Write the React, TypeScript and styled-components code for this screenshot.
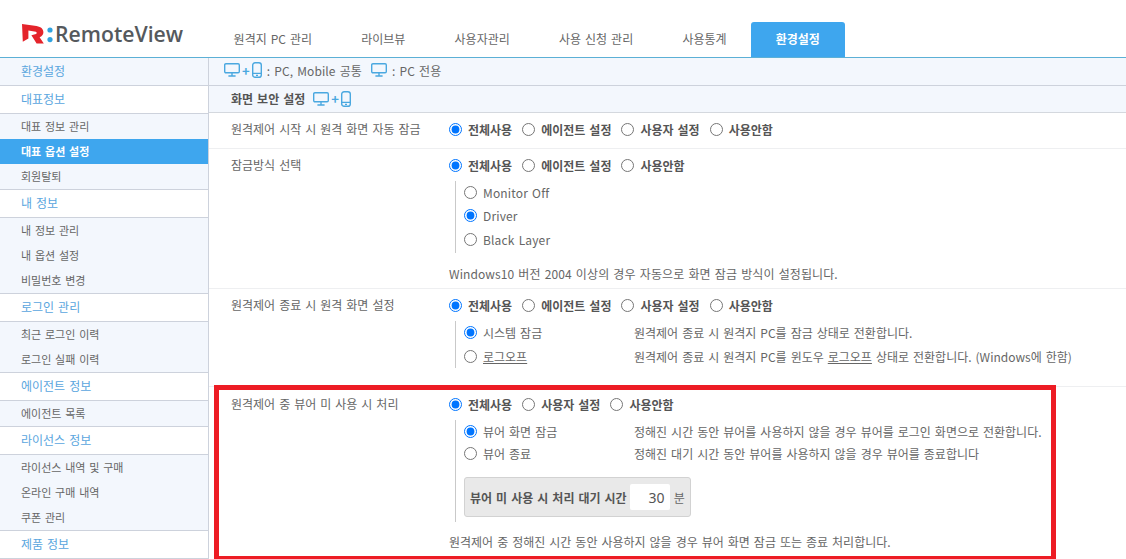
import React from "react";
import styled, { createGlobalStyle } from "styled-components";

const GlobalStyle = createGlobalStyle`
    html, body {
        margin: 0;
        padding: 0;
        background: #fff;
        overflow: hidden;
    }
    body {
        font-family: "Noto Sans CJK KR", "Noto Sans", sans-serif;
        font-size: 12px;
        word-spacing: 1.3px;
        color: #555;
    }
`;

const Page = styled.div`
    width: 1126px;
    height: 559px;
    overflow: hidden;
    position: relative;
`;

const Header = styled.header`
    display: flex;
    height: 57px;
    border-bottom: 1px solid #5cb0d6;
    box-sizing: content-box;
`;

const LogoBox = styled.div`
    width: 208px;
    display: flex;
    align-items: flex-start;
    padding: 24px 0 0 22px;
    box-sizing: border-box;
`;

const LogoText = styled.span`
    font-family: "Open Sans", sans-serif;
    font-size: 21.2px;
    line-height: 20px;
    font-weight: 600;
    color: #55595d;
    margin-left: 1px;
`;

const Tabs = styled.nav`
    display: flex;
    align-items: flex-end;
    padding-left: 1px;
`;

const Tab = styled.div<{ $active?: boolean }>`
    height: 35px;
    padding: 0 24.6px 2px;
    display: flex;
    align-items: center;
    box-sizing: border-box;
    white-space: nowrap;
    color: ${(p) => (p.$active ? "#fff" : "#666")};
    font-weight: ${(p) => (p.$active ? 700 : 400)};
    background: ${(p) => (p.$active ? "#3ea6ee" : "transparent")};
    border-radius: 3px 3px 0 0;
`;

const Body = styled.div`
    display: flex;
    height: 501px;
`;

const Sidebar = styled.aside`
    width: 209px;
    flex-shrink: 0;
    border-right: 1px solid #cdd2dc;
    box-sizing: border-box;
`;

const SideHead = styled.div<{ $tinted?: boolean }>`
    height: 28px;
    box-sizing: border-box;
    padding: 0 0 3px 21px;
    display: flex;
    align-items: center;
    color: #5aa6de;
    background: ${(p) => (p.$tinted ? "#f3f7fd" : "#fff")};
    border-bottom: 1px solid #cdd2dc;
`;

const SideGroup = styled.div`
    background: #f3f7fd;
    border-bottom: 1px solid #cdd2dc;
`;

const SideItem = styled.div<{ $active?: boolean }>`
    height: 25px;
    box-sizing: border-box;
    padding: 0 0 2px 21px;
    display: flex;
    align-items: center;
    font-size: 11px;
    color: ${(p) => (p.$active ? "#fff" : "#666")};
    font-weight: ${(p) => (p.$active ? 700 : 400)};
    background: ${(p) => (p.$active ? "#3ea6ee" : "transparent")};
`;

const Main = styled.main`
    flex: 1;
    min-width: 0;
`;

const InfoBar = styled.div`
    height: 28px;
    box-sizing: border-box;
    padding: 0 0 3px 15px;
    display: flex;
    align-items: center;
    background: #f3f7fd;
    border-bottom: 1px solid #cdd2dc;
    color: #666;
`;

const InfoText = styled.span`
    margin: 0 9px 0 5px;
    letter-spacing: 0.1px;
`;

const SectionBar = styled.div`
    height: 27px;
    box-sizing: border-box;
    padding: 0 0 1px 22px;
    display: flex;
    align-items: center;
    gap: 8px;
    background: #f3f7fd;
    border-bottom: 1px solid #d4d8de;
    font-weight: 700;
    color: #555;
`;

const Row = styled.section<{ $height: number; $top?: number; $last?: boolean }>`
    display: flex;
    height: ${(p) => p.$height}px;
    box-sizing: border-box;
    border-bottom: ${(p) => (p.$last ? "none" : "1px solid #eeeff1")};
    padding: ${(p) => p.$top ?? 7}px 0 0 22px;
`;

const RowLabel = styled.div`
    width: 218px;
    flex-shrink: 0;
    line-height: 18px;
    color: #666;
`;

const RowBody = styled.div`
    flex: 1;
    min-width: 0;
`;

const OptionLine = styled.div`
    display: flex;
    align-items: center;
    height: 18px;
    gap: 10px;
`;

const Option = styled.label<{ $bold?: boolean }>`
    display: flex;
    align-items: center;
    white-space: nowrap;
    font-weight: ${(p) => (p.$bold ? 600 : 400)};
    color: ${(p) => (p.$bold ? "#555" : "#666")};
`;

const Radio = styled.input.attrs({ type: "radio" })`
    width: 13px;
    height: 13px;
    margin: 0 6px 0 0;
    flex-shrink: 0;
`;

const SubBlock = styled.div<{ $height: number }>`
    margin: 7px 0 0 6px;
    padding-left: 8px;
    height: ${(p) => p.$height}px;
    border-left: 1px solid #c9c9c9;
    box-sizing: border-box;
`;

const SubLine = styled.div<{ $height: number }>`
    display: flex;
    align-items: center;
    height: ${(p) => p.$height}px;
`;

const SubOption = styled(Option)`
    width: 170px;
`;

const LatinLabel = styled.span`
    letter-spacing: 0.15px;
`;

const Description = styled.span`
    color: #666;
    white-space: nowrap;
`;

const Note = styled.p<{ $top: number; $latin?: boolean }>`
    margin: ${(p) => p.$top}px 0 0;
    line-height: 18px;
    color: #666;
    letter-spacing: ${(p) => (p.$latin ? "0.1px" : "0")};
`;

const WaitBox = styled.div`
    display: flex;
    align-items: center;
    width: 227px;
    height: 40px;
    margin-top: 12px;
    padding-left: 5px;
    box-sizing: border-box;
    background: #e9e9e9;
    border: 1px solid #d2d2d2;
    border-radius: 3px;
    font-weight: 600;
    color: #555;
    white-space: nowrap;
`;

const WaitInput = styled.input`
    width: 40px;
    height: 26px;
    margin: 0 4px 0 3px;
    padding: 0 5px 0 0;
    box-sizing: border-box;
    border: none;
    border-radius: 2px;
    background: #fff;
    text-align: right;
    font: 400 14px "Noto Sans", sans-serif;
    color: #555;
`;

const WaitUnit = styled.span`
    font-weight: 400;
    color: #666;
`;

const Highlight = styled.div`
    position: absolute;
    left: 214px;
    top: 385px;
    width: 842px;
    height: 176px;
    box-sizing: border-box;
    border: 5px solid #ed1c24;
    pointer-events: none;
`;

const IconGroup = styled.span`
    display: inline-flex;
    align-items: center;
    gap: 2px;
`;

const Plus = styled.span`
    color: #4aa8e0;
    font-size: 13px;
    font-weight: 700;
    line-height: 1;
`;

const Monitor = () => (
    <svg width="16" height="14" viewBox="0 0 16 14" fill="none" stroke="#4aa8e0" strokeWidth="1.4">
        <rect x="0.7" y="0.7" width="14.6" height="9.1" rx="1.2" />
        <path d="M8 10v2.6M4.4 13h7.2" />
    </svg>
);

const Phone = () => (
    <svg width="10" height="16" viewBox="0 0 10 16" fill="none" stroke="#4aa8e0" strokeWidth="1.4">
        <rect x="0.7" y="0.7" width="8.6" height="14.6" rx="2.4" />
        <path d="M0.9 11.4h8.2M4 13.4h2" />
    </svg>
);

const Both = () => (
    <IconGroup>
        <Monitor />
        <Plus>+</Plus>
        <Phone />
    </IconGroup>
);

const Logo = () => (
    <svg width="22" height="20" viewBox="0 0 22 20">
        <path
            fill="#e4242b"
            d="M0 0 L14.5 2 C19.4 2.8 21.4 5.4 21.4 8.2 C21.4 10.6 19.8 12.3 17.6 13.2 L21.8 19.4 L14.6 19.4 L9.4 11.2 L14 10 C15 9.6 15 8 13.8 7.7 L6.4 6.4 L6.4 14.6 L0.8 17.8 Z"
        />
    </svg>
);

const Colon = () => (
    <svg width="7" height="20" viewBox="0 0 7 20" style={{ marginLeft: 3 }}>
        <circle cx="3" cy="6" r="2.6" fill="#2fa3e0" />
        <circle cx="3" cy="15.6" r="2.6" fill="#2fa3e0" />
    </svg>
);

const tabs = ["원격지 PC 관리", "라이브뷰", "사용자관리", "사용 신청 관리", "사용통계", "환경설정"];

const sideMenu: { head: string; items?: string[] }[] = [
    { head: "대표정보", items: ["대표 정보 관리", "대표 옵션 설정", "회원탈퇴"] },
    { head: "내 정보", items: ["내 정보 관리", "내 옵션 설정", "비밀번호 변경"] },
    { head: "로그인 관리", items: ["최근 로그인 이력", "로그인 실패 이력"] },
    { head: "에이전트 정보", items: ["에이전트 목록"] },
    { head: "라이선스 정보", items: ["라이선스 내역 및 구매", "온라인 구매 내역", "쿠폰 관리"] },
    { head: "제품 정보" },
];

const RadioRow: React.FC<{ name: string; options: string[] }> = ({ name, options }) => (
    <OptionLine>
        {options.map((text, i) => (
            <Option key={text} $bold>
                <Radio name={name} defaultChecked={i === 0} />
                {text}
            </Option>
        ))}
    </OptionLine>
);

const SubRadio: React.FC<{ name: string; checked?: boolean; height: number; desc?: React.ReactNode; children: React.ReactNode }> = ({
    name,
    checked,
    height,
    desc,
    children,
}) => {
    const Wrap = desc ? SubOption : Option;
    return (
        <SubLine $height={height}>
            <Wrap>
                <Radio name={name} defaultChecked={checked} />
                <span>{children}</span>
            </Wrap>
            {desc && <Description>{desc}</Description>}
        </SubLine>
    );
};

export default function App() {
    return (
        <Page>
            <GlobalStyle />
            <Header>
                <LogoBox>
                    <Logo />
                    <Colon />
                    <LogoText>RemoteView</LogoText>
                </LogoBox>
                <Tabs>
                    {tabs.map((tab) => (
                        <Tab key={tab} $active={tab === "환경설정"}>
                            {tab}
                        </Tab>
                    ))}
                </Tabs>
            </Header>
            <Body>
                <Sidebar>
                    <SideHead $tinted>환경설정</SideHead>
                    {sideMenu.map((group) => (
                        <React.Fragment key={group.head}>
                            <SideHead>{group.head}</SideHead>
                            {group.items && (
                                <SideGroup>
                                    {group.items.map((item) => (
                                        <SideItem key={item} $active={item === "대표 옵션 설정"}>
                                            {item}
                                        </SideItem>
                                    ))}
                                </SideGroup>
                            )}
                        </React.Fragment>
                    ))}
                </Sidebar>
                <Main>
                    <InfoBar>
                        <Both />
                        <InfoText>: PC, Mobile 공통</InfoText>
                        <Monitor />
                        <InfoText>: PC 전용</InfoText>
                    </InfoBar>
                    <SectionBar>
                        화면 보안 설정
                        <Both />
                    </SectionBar>
                    <Row $height={36}>
                        <RowLabel>원격제어 시작 시 원격 화면 자동 잠금</RowLabel>
                        <RowBody>
                            <RadioRow name="start" options={["전체사용", "에이전트 설정", "사용자 설정", "사용안함"]} />
                        </RowBody>
                    </Row>
                    <Row $height={140}>
                        <RowLabel>잠금방식 선택</RowLabel>
                        <RowBody>
                            <RadioRow name="lock" options={["전체사용", "에이전트 설정", "사용안함"]} />
                            <SubBlock $height={72}>
                                <SubRadio name="lockType" height={22}><LatinLabel>Monitor Off</LatinLabel></SubRadio>
                                <SubRadio name="lockType" height={24} checked><LatinLabel>Driver</LatinLabel></SubRadio>
                                <SubRadio name="lockType" height={24}><LatinLabel>Black Layer</LatinLabel></SubRadio>
                            </SubBlock>
                            <Note $top={12} $latin>Windows10 버전 2004 이상의 경우 자동으로 화면 잠금 방식이 설정됩니다.</Note>
                        </RowBody>
                    </Row>
                    <Row $height={98}>
                        <RowLabel>원격제어 종료 시 원격 화면 설정</RowLabel>
                        <RowBody>
                            <RadioRow name="end" options={["전체사용", "에이전트 설정", "사용자 설정", "사용안함"]} />
                            <SubBlock $height={47}>
                                <SubRadio name="endType" height={23} checked desc="원격제어 종료 시 원격지 PC를 잠금 상태로 전환합니다.">
                                    시스템 잠금
                                </SubRadio>
                                <SubRadio
                                    name="endType"
                                    height={24}
                                    desc={<>원격제어 종료 시 원격지 PC를 윈도우 <u>로그오프</u> 상태로 전환합니다. (Windows에 한함)</>}
                                >
                                    <u>로그오프</u>
                                </SubRadio>
                            </SubBlock>
                        </RowBody>
                    </Row>
                    <Row $height={172} $top={8} $last>
                        <RowLabel>원격제어 중 뷰어 미 사용 시 처리</RowLabel>
                        <RowBody>
                            <RadioRow name="idle" options={["전체사용", "사용자 설정", "사용안함"]} />
                            <SubBlock $height={102}>
                                <SubRadio name="idleType" height={22} checked desc="정해진 시간 동안 뷰어를 사용하지 않을 경우 뷰어를 로그인 화면으로 전환합니다.">
                                    뷰어 화면 잠금
                                </SubRadio>
                                <SubRadio name="idleType" height={23} desc="정해진 대기 시간 동안 뷰어를 사용하지 않을 경우 뷰어를 종료합니다">
                                    뷰어 종료
                                </SubRadio>
                                <WaitBox>
                                    뷰어 미 사용 시 처리 대기 시간
                                    <WaitInput defaultValue="30" />
                                    <WaitUnit>분</WaitUnit>
                                </WaitBox>
                            </SubBlock>
                            <Note $top={11}>원격제어 중 정해진 시간 동안 사용하지 않을 경우 뷰어 화면 잠금 또는 종료 처리합니다.</Note>
                        </RowBody>
                    </Row>
                </Main>
            </Body>
            <Highlight />
        </Page>
    );
}
